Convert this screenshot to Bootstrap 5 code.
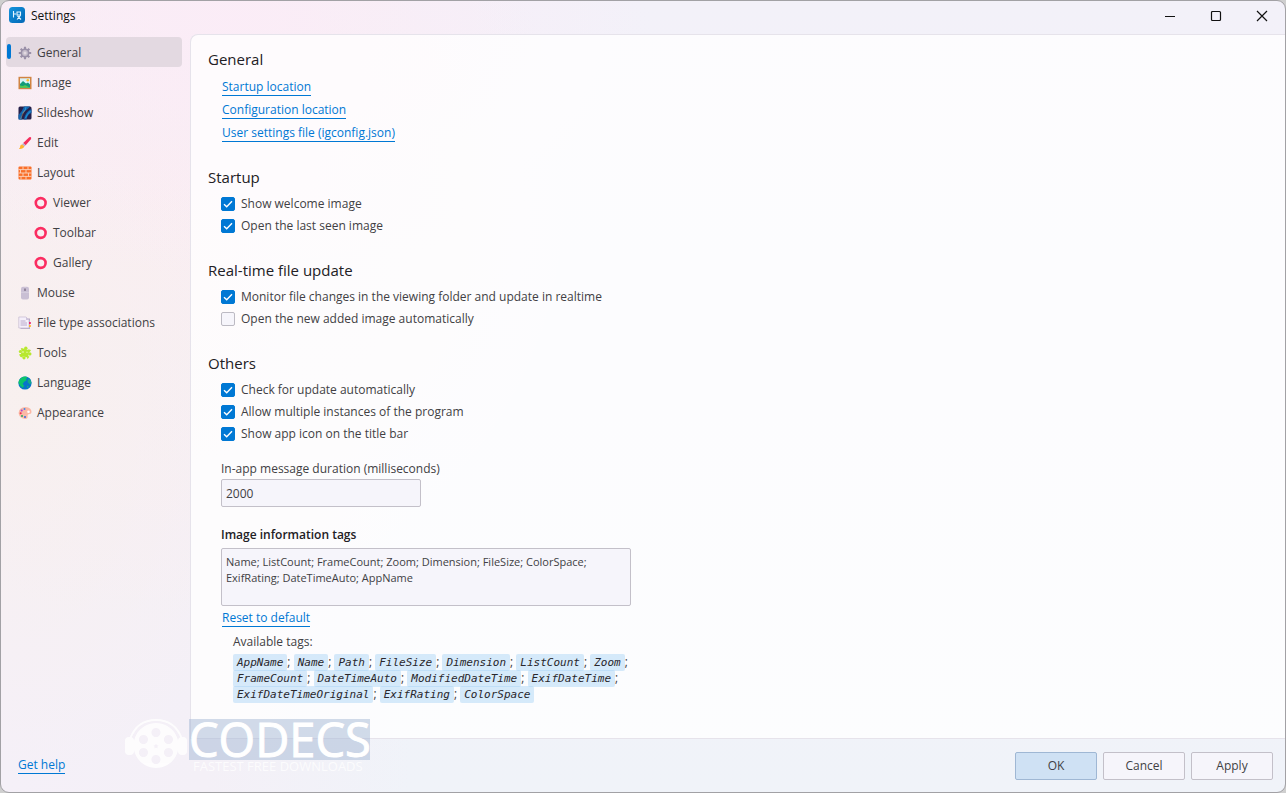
<!DOCTYPE html>
<html lang="en">
<head>
<meta charset="utf-8">
<meta name="viewport" content="width=device-width, initial-scale=1">
<title>Settings</title>
<link href="https://cdn.jsdelivr.net/npm/bootstrap@5.3.0/dist/css/bootstrap.min.css" rel="stylesheet">
<style>
  :root { --accent: #0078d4; --line: #c3c0c9; --field: #f6f5fb; }
  body { background: #cfcfcf; font-family: "Open Sans", "Noto Sans", sans-serif; font-size: 12px; line-height: 20px; color: #413f44; }
  a { color: var(--accent); text-decoration: none; border-bottom: 1px solid var(--accent); line-height: 16px; display: inline-block; }
  .app-window { border: 1px solid #a2a1a5; border-radius: 9px; overflow: hidden;
    background:
      radial-gradient(ellipse 420px 260px at 230px 20px, rgba(251,236,247,.9), rgba(251,236,247,0)),
      radial-gradient(ellipse 260px 380px at 20px 400px, rgba(248,240,238,.9), rgba(248,240,238,0)),
      radial-gradient(ellipse 420px 420px at 160px 200px, rgba(250,237,241,.9), rgba(250,237,241,0)),
      linear-gradient(90deg, #f5f0f8 0%, #f4f0f7 16%, rgba(243,241,248,0) 32%),
      linear-gradient(#f3f1f9, #f0f3f9); }
  .title-bar { height: 33px; padding-left: 8px; color: #111; }
  .title-bar .caption { line-height: 30px; }
  .win-btn { width: 46px; height: 28px; border: 0; background: none; padding: 0; color: #111; }
  .side { width: 189px; padding: 3px 8px 0 5px; }
  .side .nav-link { height: 30px; padding: 1px 0 0 12px; gap: 5px; color: #413f44; border-radius: 4px; border: 0; font-size: 12px; line-height: 30px; }
  .side .nav-link.sub-item { padding-left: 28px; }
  .side .nav-link.active { background: #e3d9e1; position: relative; }
  .side .nav-link.active::before { content: ""; position: absolute; left: 1px; top: 7px; width: 4px; height: 15px; border-radius: 2px; background: var(--accent); }
  .side svg { width: 14px; height: 14px; flex: none; }
  .pane { background: rgba(255,255,255,.78); border: solid #e6e3eb; border-width: 1px 0 1px 1px; border-top-left-radius: 8px; padding: 12px 17px 16px; }
  .pane h2 { font-size: 15px; line-height: 24px; font-weight: 400; color: #222024; margin: 0 0 4px; }
  .pane section { margin-bottom: 21px; }
  .indent { padding-left: 13px; }
  .link-row { height: 23px; padding: 2px 0 0 1px; }
  .check-row { height: 22px; gap: 6px; }
  .check-row .form-check-input { width: 14px; height: 14px; margin: 0; border-radius: 2px; border-color: #bcbac3; background-color: var(--field); }
  .check-row .form-check-input:checked { background-color: var(--accent); border-color: var(--accent);
    background-image: url("data:image/svg+xml,%3Csvg xmlns='http://www.w3.org/2000/svg' viewBox='0 0 12 12'%3E%3Cpath d='M2 6.200l2.700 2.600L10 3.300' fill='none' stroke='%23fff' stroke-width='1.400'/%3E%3C/svg%3E"); }
  .field-row { padding-top: 14px; }
  .field-row + .field-row { padding-top: 18px; }
  .field { border: 1px solid var(--line); border-radius: 2px; background: var(--field); color: #413f44; padding: 4px; font-size: 12px; }
  .field-num { width: 200px; height: 28px; }
  .tags-label { color: #222024; margin-bottom: 3px; }
  .field-tags { width: 410px; height: 58px; font-size: 11px; line-height: 16px; resize: none; padding-top: 5px; }
  .tag-list { line-height: 16px; padding-left: 12px; }
  .tag-list .avail { line-height: 24px; margin-top: 1px; }
  .tag-list code { font: italic 11px/1px "DejaVu Sans Mono", monospace; color: #29272c; background: rgba(163,209,246,.43); border-radius: 2px; padding: 2px 4px; }
  .foot { height: 53px; padding: 0 12px 0 17px; gap: 6px; }
  .foot .btn { width: 82px; height: 28px; padding: 0; font-size: 12px; border: 1px solid var(--line); border-radius: 2px; background: var(--field); color: #413f44; }
  .foot .btn.main-btn { background: #cfe1f4; border-color: #9fb7d4; }
  .stamp { position: absolute; left: 123px; bottom: 19px; color: #fff; pointer-events: none; }
  .stamp .word { background: rgba(160,182,212,.48); font-size: 47px; line-height: 41px; height: 41px; width: 181px; -webkit-text-stroke: 1px #fff; }
  .stamp .motto { font-size: 13px; line-height: 13px; padding-left: 4px; white-space: nowrap; opacity: .75; }
</style>
</head>
<body>
<div class="app-window d-flex flex-column min-vh-100 position-relative">
  <header class="title-bar d-flex align-items-start">
    <svg class="mt-1 me-1" width="18" height="20" viewBox="0 0 18 20"><defs><linearGradient id="lg" x1="0" y1="0" x2="1" y2="1"><stop offset="0" stop-color="#1593dc"/><stop offset="1" stop-color="#0368b6"/></linearGradient></defs><rect x="0" y="2" width="16" height="16" rx="3.5" fill="url(#lg)"/><path d="M4.500 6v6.500M4.500 9h2.500M7.500 7h4.500M8 7v3h3.500V7M8 14.500l3.500-4M8.500 11l3.500 3.500" fill="none" stroke="#e8f6ff" stroke-width="1.100"/></svg>
    <span class="caption flex-grow-1">Settings</span>
    <button class="win-btn" type="button" aria-label="Minimize"><svg width="12" height="12" viewBox="0 0 12 12"><path d="M1 6.500h10" stroke="currentColor"/></svg></button>
    <button class="win-btn" type="button" aria-label="Maximize"><svg width="12" height="12" viewBox="0 0 12 12"><rect x="1.500" y="1.500" width="9" height="9" rx="1" fill="none" stroke="currentColor" stroke-width="1.200"/></svg></button>
    <button class="win-btn" type="button" aria-label="Close"><svg width="12" height="12" viewBox="0 0 12 12"><path d="M1 1l10 10M11 1L1 11" stroke="currentColor" stroke-width="1.200"/></svg></button>
  </header>

  <div class="d-flex flex-grow-1">
    <nav class="side nav flex-column flex-nowrap flex-shrink-0" aria-label="Settings pages">
      <a class="nav-link d-flex align-items-center active" href="#general"><svg viewBox="0 0 14 14"><g stroke="#9a90a8" stroke-width="2.200"><path d="M7 .8v12.400M.8 7h12.400M2.700 2.700l8.600 8.600M11.300 2.700l-8.600 8.600"/></g><circle cx="7" cy="7" r="4.500" fill="#9a90a8"/><circle cx="7" cy="7" r="2.900" fill="#c5bdcb"/><circle cx="7" cy="7" r="1.500" fill="#e3d9e1"/></svg>General</a>
      <a class="nav-link d-flex align-items-center" href="#image"><svg viewBox="0 0 14 14"><rect x=".5" y=".8" width="13" height="12.400" fill="#d08443"/><rect x="2" y="2.300" width="10" height="9.400" fill="#d9f3f8"/><circle cx="9.800" cy="4.300" r="1.300" fill="#ffbb2a"/><path d="M2 8l3-3 3 2.500 2-1 2 2v3.200H2z" fill="#119b77"/><path d="M2 9.500q3 1 5-.5l5 2.700H2z" fill="#54c94e"/></svg>Image</a>
      <a class="nav-link d-flex align-items-center" href="#slideshow"><svg viewBox="0 0 14 14"><rect x=".5" y=".5" width="13" height="13" rx="1.500" fill="#25204a"/><path d="M6 .5h6q-2 3-6 5-3 2-2 8H.5V9Q4 6 6 .5M13.500 3v4q-4 1-5 6.500H6Q7 6 13.500 3" fill="#1264ae"/><path d="M8 1q0 4-4 6.500M12.500 5Q9 8 7.500 12" fill="none" stroke="#29a6e5" stroke-width=".8"/><path d="M6.500 4.500L2.500 13" stroke="#f2b454" stroke-width=".4"/></svg>Slideshow</a>
      <a class="nav-link d-flex align-items-center" href="#edit"><svg viewBox="0 0 14 14"><path d="M11.200 1.200q2.600-.7 1.900 1.700L7.700 9.200 5.200 7z" fill="#f52d5d"/><path d="M5.200 7L7.700 9.200 6.300 10.500 4 8.500z" fill="#b9b2c8"/><path d="M4 8.500L6.300 10.500Q5.300 13.300.8 12.900q1.500-1 1.300-2.400.2-1.800 1.900-2" fill="#ffb62e"/></svg>Edit</a>
      <a class="nav-link d-flex align-items-center" href="#layout"><svg viewBox="0 0 14 14"><rect x=".5" y=".5" width="13" height="13" rx="1" fill="#f96f29"/><path d="M.5 3.600h13M.5 7h13M.5 10.400h13M5 .5v3.100M10 .5v3.100M2.500 3.600V7M8 3.600V7M5 7v3.400M10.500 7v3.400M3 10.400v3.100M8 10.400v3.100" stroke="#fbd5c1" stroke-width=".9"/></svg>Layout</a>
      <a class="nav-link d-flex align-items-center sub-item" href="#viewer"><svg viewBox="0 0 14 14"><circle cx="6.700" cy="7" r="4.900" fill="none" stroke="#fb2d61" stroke-width="2.600"/></svg>Viewer</a>
      <a class="nav-link d-flex align-items-center sub-item" href="#toolbar"><svg viewBox="0 0 14 14"><circle cx="6.700" cy="7" r="4.900" fill="none" stroke="#fb2d61" stroke-width="2.600"/></svg>Toolbar</a>
      <a class="nav-link d-flex align-items-center sub-item" href="#gallery"><svg viewBox="0 0 14 14"><circle cx="6.700" cy="7" r="4.900" fill="none" stroke="#fb2d61" stroke-width="2.600"/></svg>Gallery</a>
      <a class="nav-link d-flex align-items-center" href="#mouse"><svg viewBox="0 0 14 14"><rect x="3" y=".8" width="8" height="12.600" rx="2" fill="#c9bfd4"/><path d="M7 1v5M3 6.300h8" stroke="#ddd5e4" stroke-width=".7"/><rect x="6.300" y="2.300" width="1.400" height="3" rx=".7" fill="#75667f"/></svg>Mouse</a>
      <a class="nav-link d-flex align-items-center" href="#files"><svg viewBox="0 0 14 14"><path d="M2.500 2.500H12V13H2.500z" fill="#b9abc8"/><path d="M.8 1H8l3 3v8H.8z" fill="#f5effa" stroke="#c4b9d0" stroke-width=".7"/><path d="M8 1v3h3" fill="#cfc4dc"/><path d="M2.500 5h5M2.500 7h6.500M2.500 9h6.500" stroke="#aa9bbf" stroke-width=".8"/><path d="M11 6h1.800v2H11z" fill="#ec2871"/><path d="M11 9h1.800v2H11z" fill="#ffb52d"/></svg>File type associations</a>
      <a class="nav-link d-flex align-items-center" href="#tools"><svg viewBox="0 0 14 14"><g fill="#b7e82e"><path d="M4.200 2.600l7.200 1.700-1.600 7.200-7.200-1.700z"/><circle cx="7.800" cy="2.300" r="1.700"/><circle cx="11.800" cy="7.900" r="1.700"/><circle cx="2.300" cy="5.400" r="1.500"/><circle cx="6" cy="11.800" r="1.600"/><path d="M2.800 2l3 .8-2 3zM10 3.200l3 .8-1.500 2.500zM1 8.500l3-1 1 4-2.500-.5zM8.500 9l3 1.800-2 2.400z"/></g><circle cx="5" cy="6" r=".9" fill="#dff39b"/><circle cx="9" cy="6.200" r=".8" fill="#dff39b"/></svg>Tools</a>
      <a class="nav-link d-flex align-items-center" href="#language"><svg viewBox="0 0 14 14"><circle cx="7" cy="7" r="6.600" fill="#0874ca"/><path d="M5 .8Q9 0 9.500 1.500L8 3l.5 1.500-2 1L4.500 8 6 9.500 5 12Q1.500 9.500.5 7q0-4 4.500-6.200" fill="#0cc46b"/><path d="M10 3l2.600.7.9 3.300-1.700 1.500L9.500 6zM9 9.500l2 .8L9 12.500z" fill="#13a88b"/></svg>Language</a>
      <a class="nav-link d-flex align-items-center" href="#appearance"><svg viewBox="0 0 14 14"><path d="M7.500 1q6 .4 6 5 0 2.200-2.300 2-1.700 0-1.600 1.700.6 3.300-2.600 3.200Q.8 12 .6 7 1 1.300 7.500 1" fill="#fbb9a6"/><circle cx="10.500" cy="5.800" r="1.300" fill="#fff"/><circle cx="6.500" cy="3" r="1" fill="#4385e8"/><circle cx="3.700" cy="4.500" r="1" fill="#a743d2"/><circle cx="2.700" cy="7.300" r="1" fill="#f02b50"/><circle cx="4" cy="10" r="1" fill="#29ae60"/><circle cx="7" cy="11" r="1" fill="#356ce0"/></svg>Appearance</a>
    </nav>

    <main class="pane flex-grow-1">
      <section>
        <h2>General</h2>
        <div class="indent">
          <div class="link-row"><a href="#startup">Startup location</a></div>
          <div class="link-row"><a href="#config">Configuration location</a></div>
          <div class="link-row"><a href="#user">User settings file (igconfig.json)</a></div>
        </div>
      </section>
      <section>
        <h2>Startup</h2>
        <div class="indent">
          <div class="check-row d-flex align-items-center"><input class="form-check-input" type="checkbox" id="c1" checked><label for="c1">Show welcome image</label></div>
          <div class="check-row d-flex align-items-center"><input class="form-check-input" type="checkbox" id="c2" checked><label for="c2">Open the last seen image</label></div>
        </div>
      </section>
      <section>
        <h2>Real-time file update</h2>
        <div class="indent">
          <div class="check-row d-flex align-items-center"><input class="form-check-input" type="checkbox" id="c3" checked><label for="c3">Monitor file changes in the viewing folder and update in realtime</label></div>
          <div class="check-row d-flex align-items-center"><input class="form-check-input" type="checkbox" id="c4"><label for="c4">Open the new added image automatically</label></div>
        </div>
      </section>
      <section class="mb-0">
        <h2>Others</h2>
        <div class="indent">
          <div class="check-row d-flex align-items-center"><input class="form-check-input" type="checkbox" id="c5" checked><label for="c5">Check for update automatically</label></div>
          <div class="check-row d-flex align-items-center"><input class="form-check-input" type="checkbox" id="c6" checked><label for="c6">Allow multiple instances of the program</label></div>
          <div class="check-row d-flex align-items-center"><input class="form-check-input" type="checkbox" id="c7" checked><label for="c7">Show app icon on the title bar</label></div>
          <div class="field-row d-flex flex-column align-items-start">
            <label for="dur">In-app message duration (milliseconds)</label>
            <input class="field field-num" type="text" id="dur" value="2000">
          </div>
          <div class="field-row d-flex flex-column align-items-start">
            <label for="tags" class="fw-semibold tags-label">Image information tags</label>
            <textarea class="field field-tags" id="tags">Name; ListCount; FrameCount; Zoom; Dimension; FileSize; ColorSpace; ExifRating; DateTimeAuto; AppName</textarea>
          </div>
          <div class="link-row"><a href="#reset">Reset to default</a></div>
          <div class="tag-list">
            <div class="avail">Available tags:</div>
            <code>AppName</code>; <code>Name</code>; <code>Path</code>; <code>FileSize</code>; <code>Dimension</code>; <code>ListCount</code>; <code>Zoom</code>;<br>
            <code>FrameCount</code>; <code>DateTimeAuto</code>; <code>ModifiedDateTime</code>; <code>ExifDateTime</code>;<br>
            <code>ExifDateTimeOriginal</code>; <code>ExifRating</code>; <code>ColorSpace</code>
          </div>
        </div>
      </section>
    </main>
  </div>

  <footer class="foot d-flex align-items-center">
    <a class="me-auto" href="#help">Get help</a>
    <button class="btn main-btn" type="button">OK</button>
    <button class="btn" type="button">Cancel</button>
    <button class="btn" type="button">Apply</button>
  </footer>

  <div class="stamp d-flex">
    <svg width="65" height="52" viewBox="0 0 65 52"><g opacity=".85"><path d="M6 20Q13 1 32 1t26 19" fill="none" stroke="#fff" stroke-width="2"/><rect x="1" y="18" width="9" height="18" rx="4" fill="#fff"/><rect x="54" y="18" width="9" height="18" rx="4" fill="#fff"/><path fill-rule="evenodd" fill="#fff" d="M32 4a22.500 22.500 0 1 0 .1 0zM32 9a4.500 4.500 0 1 1-.1 0zM44.500 16a4.500 4.500 0 1 1-.1 0zM44.500 29a4.500 4.500 0 1 1-.1 0zM32 36a4.500 4.500 0 1 1-.1 0zM19.500 29a4.500 4.500 0 1 1-.1 0zM19.500 16a4.500 4.500 0 1 1-.1 0zM32 24.500l.8 1.700 1.900.2-1.400 1.300.4 1.900-1.700-1-1.700 1 .4-1.900-1.400-1.300 1.900-.2z"/></g></svg>
    <div>
      <div class="word">CODECS</div>
      <div class="motto">FASTEST FREE DOWNLOADS</div>
    </div>
  </div>
</div>
<script src="https://cdn.jsdelivr.net/npm/bootstrap@5.3.0/dist/js/bootstrap.bundle.min.js"></script>
</body>
</html>
